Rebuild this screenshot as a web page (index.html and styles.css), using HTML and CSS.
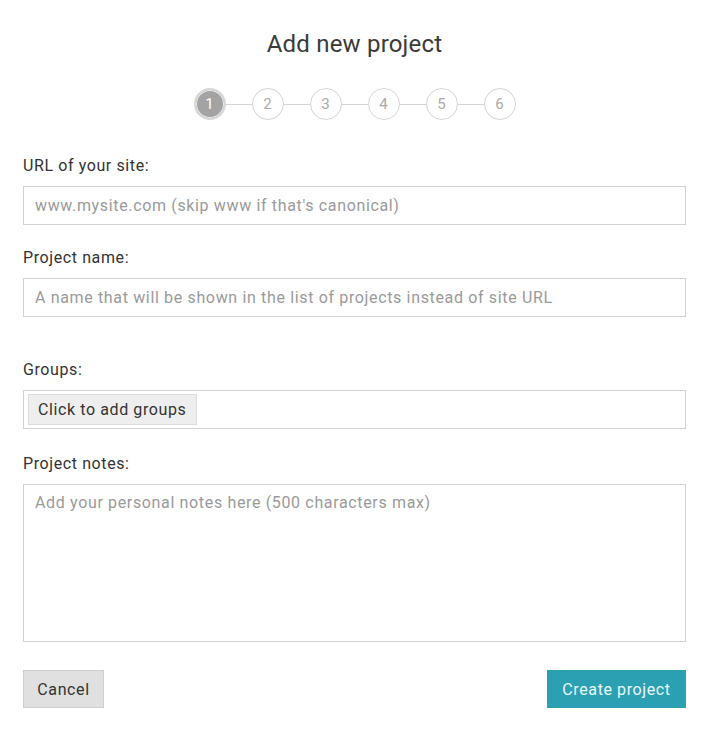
FILE: index.html
```html
<!DOCTYPE html>
<html>
<head>
<meta charset="utf-8">
<link rel="stylesheet" href="styles.css">
</head>
<body>
<div class="dialog">
  <h1 class="title">Add new project</h1>
  <div class="stepper">
    <span class="step active">1</span><span class="line"></span>
    <span class="step">2</span><span class="line"></span>
    <span class="step">3</span><span class="line"></span>
    <span class="step">4</span><span class="line"></span>
    <span class="step">5</span><span class="line"></span>
    <span class="step">6</span>
  </div>
  <div class="field f-url">
    <label class="label">URL of your site:</label>
    <div class="input"><span class="ph">www.mysite.com (skip www if that's canonical)</span></div>
  </div>
  <div class="field f-name">
    <label class="label">Project name:</label>
    <div class="input"><span class="ph">A name that will be shown in the list of projects instead of site URL</span></div>
  </div>
  <div class="field f-groups">
    <label class="label">Groups:</label>
    <div class="input groups"><span class="gbtn">Click to add groups</span></div>
  </div>
  <div class="field f-notes">
    <label class="label">Project notes:</label>
    <div class="input notes"><span class="ph">Add your personal notes here (500 characters max)</span></div>
  </div>
  <div class="actions">
    <span class="btn cancel">Cancel</span>
    <span class="btn create">Create project</span>
  </div>
</div>
</body>
</html>
```
FILE: styles.css
```css
html, body { margin: 0; padding: 0; background: #fff; }
body { font-family: Roboto, "Liberation Sans", sans-serif; color: #333; }
.dialog { width: 663px; padding: 0 24px 0 23px; }
.title { margin: 0; padding-top: 31px; height: 27px; line-height: 27px; text-align: center; font-size: 24px; font-weight: 400; letter-spacing: 0.2px; color: #3a3a3a; }
.stepper { display: flex; align-items: center; justify-content: center; margin-top: 30px; height: 32px; }
.step { box-sizing: border-box; width: 32px; height: 32px; border-radius: 50%; border: 1.5px solid #d4d4d4; display: flex; align-items: center; justify-content: center; font-size: 15px; color: #aaa; background: #fff; }
.step.active { background: #a3a3a3; color: #fff; border: 2px solid #d8d8d8; box-shadow: inset 0 0 0 1px #ececec; }
.line { width: 26px; height: 1px; background: #d4d4d4; }
.field { display: flex; flex-direction: column; }
.label { font-size: 16px; line-height: 18px; letter-spacing: 0.6px; color: #333; margin-bottom: 11px; }
.f-url { margin-top: 37px; }
.f-name { margin-top: 24px; }
.f-groups { margin-top: 44px; }
.f-notes { margin-top: 26px; }
.input { box-sizing: border-box; height: 39px; border: 1px solid #d2d2d2; display: flex; align-items: center; padding: 0 11px; }
.ph { font-size: 16px; letter-spacing: 0.65px; color: #9a9a9a; white-space: nowrap; }
.groups { padding: 0 4px; }
.gbtn { box-sizing: border-box; height: 31px; width: 169px; display: flex; align-items: center; padding-left: 9px; background: #eee; border: 1px solid #dcdcdc; font-size: 16px; letter-spacing: 0.6px; color: #333; }
.notes { height: 158px; align-items: flex-start; padding-top: 8px; }
.actions { display: flex; justify-content: space-between; margin-top: 28px; }
.btn { box-sizing: border-box; height: 38px; display: flex; align-items: center; justify-content: center; font-size: 16px; letter-spacing: 0.6px; }
.cancel { width: 81px; background: #e0e0e0; border: 1px solid #cfcfcf; color: #333; }
.create { width: 139px; background: #2ba0b2; color: #e8f6f8; }
```
